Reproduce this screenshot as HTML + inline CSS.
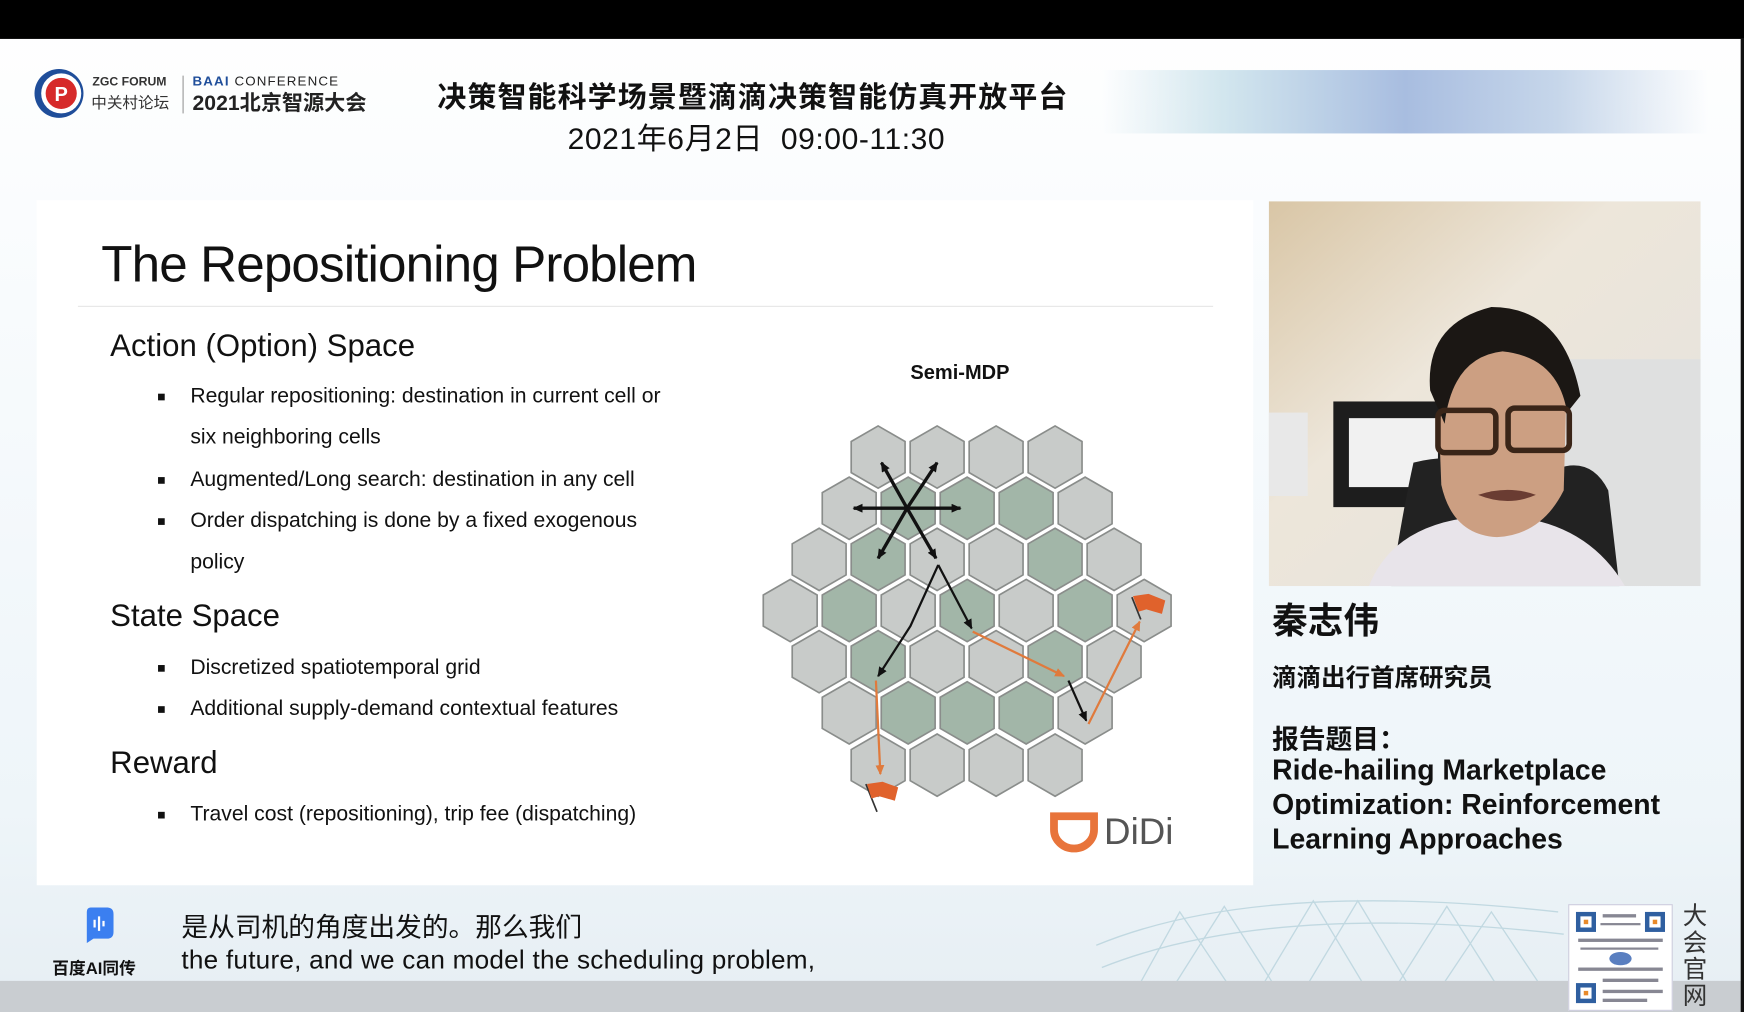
<!DOCTYPE html>
<html><head><meta charset="utf-8"><style>
html,body{margin:0;padding:0;width:1744px;height:1012px;overflow:hidden;background:#fff}
#s{position:absolute;left:0;top:0;width:1567px;height:910px;transform:scale(1.11297,1.1121);transform-origin:0 0;font-family:"Liberation Sans","Noto Sans CJK SC",sans-serif;
background:linear-gradient(180deg,#fff 0%,#f8fbfd 30%,#eef5f9 80%,#e6eef3 100%);overflow:hidden}
.a{position:absolute;white-space:nowrap}
.blk{position:absolute;left:0;top:0;width:1567px;height:35px;background:#000}
.band{position:absolute;left:990px;top:63px;width:545px;height:57px;background:linear-gradient(90deg,rgba(255,255,255,0),#d2e6ee 20%,#a8bde0 50%,#c6d6ea 75%,rgba(255,255,255,0))}
.panel{position:absolute;left:33px;top:180px;width:1093px;height:616px;background:#fff}
.b{font-size:19px;color:#111}
.sq{position:absolute;width:6px;height:6px;background:#111}
.h2{font-size:28px;color:#111}
.bot{position:absolute;left:0;top:882px;width:1567px;height:28px;background:#c9cdd1}
</style></head><body><div id="s">
<div class="blk"></div>
<div class="band"></div>
<svg class="a" style="left:30px;top:60px" width="50" height="50" viewBox="0 0 50 50"><circle cx="23" cy="24" r="22" fill="#1f4e9a"/><circle cx="25" cy="24" r="18" fill="#fff"/><circle cx="25" cy="24" r="14" fill="#d62a2a"/><text x="19" y="31" font-size="18" font-weight="bold" fill="#fff" font-family="Liberation Sans">P</text></svg>
<div class="a" style="left:83px;top:68px;font-size:11px;color:#333;font-weight:bold">ZGC FORUM</div>
<div class="a" style="left:82px;top:82px;font-size:14px;color:#333">中关村论坛</div>
<div class="a" style="left:164px;top:68px;width:1px;height:34px;background:#999"></div>
<div class="a" style="left:173px;top:66px;font-size:12px;color:#222;letter-spacing:1px"><span style="color:#1f4e9a;font-weight:bold">BAAI</span> CONFERENCE</div>
<div class="a" style="left:173px;top:78px;font-size:19px;color:#222;font-weight:bold">2021北京智源大会</div>
<div class="a" style="left:393px;top:67px;font-size:26px;font-weight:bold;color:#111;letter-spacing:1px">决策智能科学场景暨滴滴决策智能仿真开放平台</div>
<div class="a" style="left:510px;top:103px;font-size:27px;color:#111;letter-spacing:0.5px">2021年6月2日&nbsp;&nbsp;09:00-11:30</div>

<div class="panel"></div>
<div class="a" style="left:91px;top:210px;font-size:46px;color:#111;letter-spacing:-0.8px">The Repositioning Problem</div>
<div class="a" style="left:70px;top:275px;width:1020px;height:1px;background:#e6e6e6"></div>
<div class="a h2" style="left:99px;top:295px">Action (Option) Space</div>
<div class="sq" style="left:142px;top:354px"></div><div class="a b" style="left:171px;top:346px">Regular repositioning: destination in current cell or</div>
<div class="a b" style="left:171px;top:383px">six neighboring cells</div>
<div class="sq" style="left:142px;top:429px"></div><div class="a b" style="left:171px;top:421px">Augmented/Long search: destination in any cell</div>
<div class="sq" style="left:142px;top:466px"></div><div class="a b" style="left:171px;top:458px">Order dispatching is done by a fixed exogenous</div>
<div class="a b" style="left:171px;top:495px">policy</div>
<div class="a h2" style="left:99px;top:538px">State Space</div>
<div class="sq" style="left:142px;top:598px"></div><div class="a b" style="left:171px;top:590px">Discretized spatiotemporal grid</div>
<div class="sq" style="left:142px;top:635px"></div><div class="a b" style="left:171px;top:627px">Additional supply-demand contextual features</div>
<div class="a h2" style="left:99px;top:670px">Reward</div>
<div class="sq" style="left:142px;top:730px"></div><div class="a b" style="left:171px;top:722px">Travel cost (repositioning), trip fee (dispatching)</div>

<div class="a" style="left:818px;top:325px;font-size:18px;font-weight:bold;color:#111">Semi-MDP</div>
<svg class="a" style="left:0;top:0" width="1130" height="800" viewBox="0 0 1130 800">
<defs><polygon id="h" points="0,-28 24.2,-14 24.2,14 0,28 -24.2,14 -24.2,-14" stroke="#8a8d8b" stroke-width="1.5"/>
<marker id="ar" markerUnits="userSpaceOnUse" markerWidth="10" markerHeight="10" refX="8" refY="4" orient="auto"><path d="M0,0 L9,4 L0,8z" fill="#111"/></marker>
<marker id="ao" markerUnits="userSpaceOnUse" markerWidth="10" markerHeight="10" refX="8" refY="4" orient="auto"><path d="M0,0 L9,4 L0,8z" fill="#e07a3c"/></marker></defs>
<g fill="#c8cbc9">
<use href="#h" x="789" y="411"/><use href="#h" x="842" y="411"/><use href="#h" x="895" y="411"/><use href="#h" x="948" y="411"/>
<use href="#h" x="763" y="457"/><use href="#h" x="816" y="457" fill="#a2b6a8"/><use href="#h" x="869" y="457" fill="#a2b6a8"/><use href="#h" x="922" y="457" fill="#a2b6a8"/><use href="#h" x="975" y="457"/>
<use href="#h" x="736" y="503"/><use href="#h" x="789" y="503" fill="#a2b6a8"/><use href="#h" x="842" y="503"/><use href="#h" x="895" y="503"/><use href="#h" x="948" y="503" fill="#a2b6a8"/><use href="#h" x="1001" y="503"/>
<use href="#h" x="710" y="549"/><use href="#h" x="763" y="549" fill="#a2b6a8"/><use href="#h" x="816" y="549"/><use href="#h" x="869" y="549" fill="#a2b6a8"/><use href="#h" x="922" y="549"/><use href="#h" x="975" y="549" fill="#a2b6a8"/><use href="#h" x="1028" y="549"/>
<use href="#h" x="736" y="595"/><use href="#h" x="789" y="595" fill="#a2b6a8"/><use href="#h" x="842" y="595"/><use href="#h" x="895" y="595"/><use href="#h" x="948" y="595" fill="#a2b6a8"/><use href="#h" x="1001" y="595"/>
<use href="#h" x="763" y="641"/><use href="#h" x="816" y="641" fill="#a2b6a8"/><use href="#h" x="869" y="641" fill="#a2b6a8"/><use href="#h" x="922" y="641" fill="#a2b6a8"/><use href="#h" x="975" y="641"/>
<use href="#h" x="789" y="688"/><use href="#h" x="842" y="688"/><use href="#h" x="895" y="688"/><use href="#h" x="948" y="688"/>
</g>
<g stroke="#111" stroke-width="3" marker-end="url(#ar)" fill="none">
<line x1="815" y1="457" x2="792" y2="416"/><line x1="815" y1="457" x2="842" y2="416"/><line x1="815" y1="457" x2="767" y2="457"/><line x1="815" y1="457" x2="863" y2="457"/><line x1="815" y1="457" x2="789" y2="502"/><line x1="815" y1="457" x2="841" y2="502"/>
</g>
<g stroke="#111" stroke-width="2" marker-end="url(#ar)" fill="none">
<polyline points="843,508 818,563 789,608"/><line x1="843" y1="508" x2="873" y2="565"/><line x1="960" y1="612" x2="976" y2="648"/>
</g>
<g stroke="#e07a3c" stroke-width="2" marker-end="url(#ao)" fill="none">
<line x1="874" y1="568" x2="956" y2="608"/><line x1="978" y1="651" x2="1024" y2="559"/><line x1="787" y1="612" x2="791" y2="696"/>
</g>
<line x1="778" y1="705" x2="788" y2="730" stroke="#333" stroke-width="1.5"/><path d="M779,705 L793,703 L807,708 L804,720 L790,716 L783,718z" fill="#e0622c"/>
<line x1="1017" y1="537" x2="1025" y2="557" stroke="#333" stroke-width="1.5"/><path d="M1018,536 L1032,534 L1047,540 L1044,552 L1030,548 L1023,550z" fill="#e0622c"/>
<path d="M947,734 L983,734 L983,746 A18,17 0 0 1 947,746z" fill="none" stroke="#e8743b" stroke-width="7"/>
<text x="992" y="759" font-size="33" fill="#555" font-family="Liberation Sans">DiDi</text>
</svg>

<svg class="a" style="left:1140px;top:181px" width="388" height="346" viewBox="0 0 388 346">
<defs><linearGradient id="w" x1="0" y1="0" x2="1" y2="1"><stop offset="0" stop-color="#d9c6a6"/><stop offset=".4" stop-color="#ede6da"/><stop offset="1" stop-color="#e4e2de"/></linearGradient></defs>
<rect width="388" height="346" fill="url(#w)"/>
<rect x="260" y="142" width="128" height="204" fill="#dfe0e0"/>
<rect x="0" y="190" width="35" height="75" fill="#e8e8e8"/>
<rect x="58" y="180" width="110" height="95" fill="#1d1d1d"/><rect x="72" y="195" width="80" height="62" fill="#f1f1f1"/>
<path d="M130,235 Q170,225 200,240 L260,240 Q290,230 305,260 L315,346 L110,346 Q120,280 130,235z" fill="#222"/>
<path d="M90,346 Q110,295 175,285 L230,285 Q290,295 320,346z" fill="#e8e4ea"/>
<path d="M152,175 Q150,120 200,105 Q250,100 268,150 L265,260 Q245,300 205,302 Q165,300 155,255z" fill="#cc9f82"/>
<path d="M145,170 Q140,110 200,95 Q265,95 280,175 L268,190 Q260,140 210,135 Q165,140 158,200z" fill="#1b1714"/>
<g fill="none" stroke="#3a2518" stroke-width="5"><rect x="152" y="188" width="52" height="38" rx="6"/><rect x="215" y="186" width="55" height="38" rx="6"/></g>
<path d="M188,264 Q215,255 240,264 Q215,275 188,264z" fill="#6a3c32"/>
</svg>
<div class="a" style="left:1143px;top:533px;font-size:32px;font-weight:bold;color:#111">秦志伟</div>
<div class="a" style="left:1143px;top:592px;font-size:22px;font-weight:bold;color:#111">滴滴出行首席研究员</div>
<div class="a" style="left:1143px;top:645px;font-size:24px;font-weight:bold;color:#111">报告题目：</div>
<div class="a" style="left:1143px;top:678px;font-size:25.5px;font-weight:bold;color:#111;line-height:31px">Ride-hailing Marketplace<br>Optimization: Reinforcement<br>Learning Approaches</div>

<svg class="a" style="left:980px;top:800px" width="430" height="110" viewBox="0 0 430 110"><g fill="none" stroke="#b7d3dc" stroke-width="1.2" opacity=".8"><path d="M5,50 Q150,-10 420,20"/><path d="M10,70 Q160,10 425,40"/><path d="M30,110 L80,20 L140,110 L200,10 L260,110 L320,15 L380,110"/><path d="M60,110 L120,15 L180,110 L240,10 L300,110 L360,20 L420,110"/></g></svg>
<div class="bot"></div>
<svg class="a" style="left:74px;top:816px" width="30" height="32" viewBox="0 0 30 32"><path d="M4,4 Q4,0 8,0 L22,0 Q28,0 28,6 L28,22 Q28,28 22,28 L10,28 L4,32z" fill="#3b7ff0"/><g stroke="#fff" stroke-width="2"><line x1="11" y1="11" x2="11" y2="18"/><line x1="15" y1="8" x2="15" y2="21"/><line x1="19" y1="12" x2="19" y2="17"/></g></svg>
<div class="a" style="left:47px;top:860px;font-size:15px;font-weight:bold;color:#111">百度AI同传</div>
<div class="a" style="left:163px;top:814px;font-size:24px;color:#111">是从司机的角度出发的。那么我们</div>
<div class="a" style="left:163px;top:850px;font-size:23.5px;color:#111;letter-spacing:0.2px">the future, and we can model the scheduling problem,</div>
<div class="a" style="left:1409px;top:813px;width:92px;height:94px;background:#fff;border:1px solid #ccd"></div>
<svg class="a" style="left:1414px;top:818px" width="84" height="86" viewBox="0 0 84 86"><g fill="#2f5fa0"><rect x="2" y="2" width="18" height="18"/><rect x="64" y="2" width="18" height="18"/><rect x="2" y="66" width="18" height="18"/></g><g fill="#fff"><rect x="6" y="6" width="10" height="10"/><rect x="68" y="6" width="10" height="10"/><rect x="6" y="70" width="10" height="10"/></g><g fill="#e88a2a"><rect x="9" y="9" width="4" height="4"/><rect x="71" y="9" width="4" height="4"/><rect x="9" y="73" width="4" height="4"/></g><g fill="#556" opacity=".7"><rect x="26" y="4" width="30" height="3"/><rect x="24" y="12" width="36" height="2"/><rect x="4" y="26" width="76" height="3"/><rect x="6" y="34" width="70" height="2"/><rect x="4" y="52" width="76" height="3"/><rect x="26" y="62" width="50" height="3"/><rect x="26" y="72" width="54" height="3"/><rect x="26" y="80" width="40" height="3"/></g><ellipse cx="42" cy="44" rx="10" ry="6" fill="#5a7fc0"/></svg>
<div class="a" style="left:1512px;top:812px;font-size:22px;color:#333;line-height:24px;white-space:normal;width:24px">大会官网</div>
<div class="a" style="left:1564px;top:35px;width:3px;height:875px;background:#111"></div>
</div></body></html>
